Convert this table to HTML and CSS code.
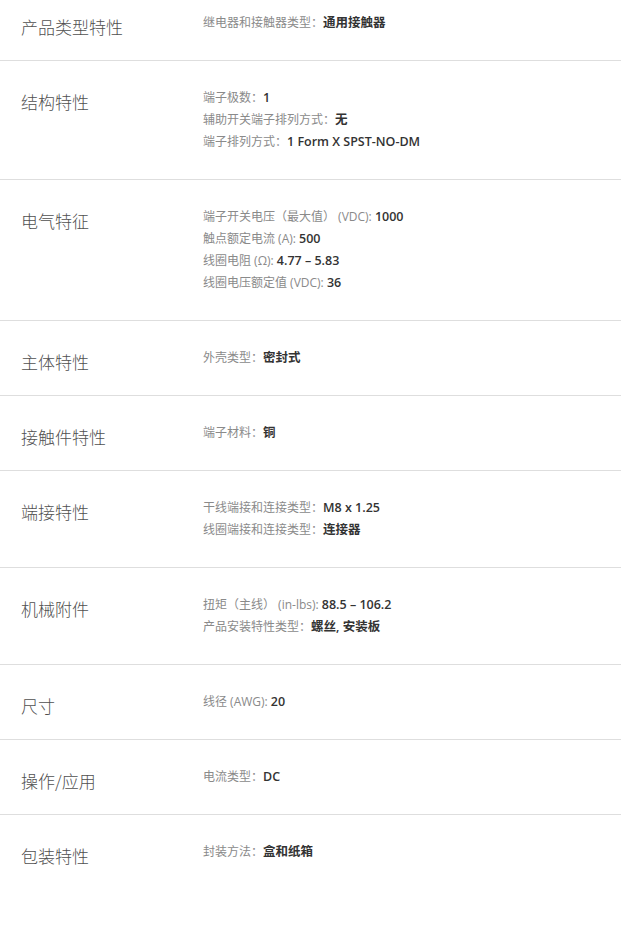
FILE: index.html
```html
<!DOCTYPE html>
<html lang="zh-CN">
<head>
<meta charset="utf-8">
<title>产品规格</title>
<link rel="stylesheet" href="styles.css">
</head>
<body>
<div class="specs">
  <section class="row first">
    <h3 class="heading">产品类型特性</h3>
    <ul class="attrs">
      <li><span class="lbl">继电器和接触器类型：</span><b>通用接触器</b></li>
    </ul>
  </section>
  <section class="row">
    <h3 class="heading">结构特性</h3>
    <ul class="attrs">
      <li><span class="lbl">端子极数：</span><b>1</b></li>
      <li><span class="lbl">辅助开关端子排列方式：</span><b>无</b></li>
      <li><span class="lbl">端子排列方式：</span><b>1 Form X SPST-NO-DM</b></li>
    </ul>
  </section>
  <section class="row">
    <h3 class="heading">电气特征</h3>
    <ul class="attrs">
      <li><span class="lbl">端子开关电压（最大值） (VDC): </span><b>1000</b></li>
      <li><span class="lbl">触点额定电流 (A): </span><b>500</b></li>
      <li><span class="lbl">线圈电阻 (Ω): </span><b>4.77 – 5.83</b></li>
      <li><span class="lbl">线圈电压额定值 (VDC): </span><b>36</b></li>
    </ul>
  </section>
  <section class="row">
    <h3 class="heading">主体特性</h3>
    <ul class="attrs">
      <li><span class="lbl">外壳类型：</span><b>密封式</b></li>
    </ul>
  </section>
  <section class="row">
    <h3 class="heading">接触件特性</h3>
    <ul class="attrs">
      <li><span class="lbl">端子材料：</span><b>铜</b></li>
    </ul>
  </section>
  <section class="row">
    <h3 class="heading">端接特性</h3>
    <ul class="attrs">
      <li><span class="lbl">干线端接和连接类型：</span><b>M8 x 1.25</b></li>
      <li><span class="lbl">线圈端接和连接类型：</span><b>连接器</b></li>
    </ul>
  </section>
  <section class="row">
    <h3 class="heading">机械附件</h3>
    <ul class="attrs">
      <li><span class="lbl">扭矩（主线） (in-lbs): </span><b>88.5 – 106.2</b></li>
      <li><span class="lbl">产品安装特性类型：</span><b>螺丝, 安装板</b></li>
    </ul>
  </section>
  <section class="row">
    <h3 class="heading">尺寸</h3>
    <ul class="attrs">
      <li><span class="lbl">线径 (AWG): </span><b>20</b></li>
    </ul>
  </section>
  <section class="row">
    <h3 class="heading">操作/应用</h3>
    <ul class="attrs">
      <li><span class="lbl">电流类型：</span><b>DC</b></li>
    </ul>
  </section>
  <section class="row last">
    <h3 class="heading">包装特性</h3>
    <ul class="attrs">
      <li><span class="lbl">封装方法：</span><b>盒和纸箱</b></li>
    </ul>
  </section>
</div>
</body>
</html>
```
FILE: styles.css
```css
html, body {
  margin: 0;
  padding: 0;
  background: #fff;
}
body {
  font-family: "Open Sans", "Noto Sans CJK SC", sans-serif;
  color: #333;
}
.specs {
  width: 621px;
}
.row {
  display: flex;
  align-items: flex-start;
  padding: 26px 0 26px 0;
  border-bottom: 1px solid #dedede;
}
.row.first {
  padding-top: 12px;
  padding-bottom: 26px;
}
.row.last {
  border-bottom: none;
}
.heading {
  margin: 4px 0 -4px 0;
  width: 203px;
  padding-left: 21px;
  box-sizing: border-box;
  flex: none;
  font-family: "Noto Sans CJK SC", sans-serif;
  font-size: 17px;
  font-weight: 300;
  line-height: 22px;
  color: #505050;
}
.attrs {
  list-style: none;
  margin: 0;
  padding: 0;
}
.attrs li {
  height: 22px;
  line-height: 22px;
  font-size: 12px;
  white-space: nowrap;
}
.lbl {
  color: #8a8a8a;
}
.attrs b {
  font-size: 12.5px;
  font-weight: 600;
  color: #333;
}
```
